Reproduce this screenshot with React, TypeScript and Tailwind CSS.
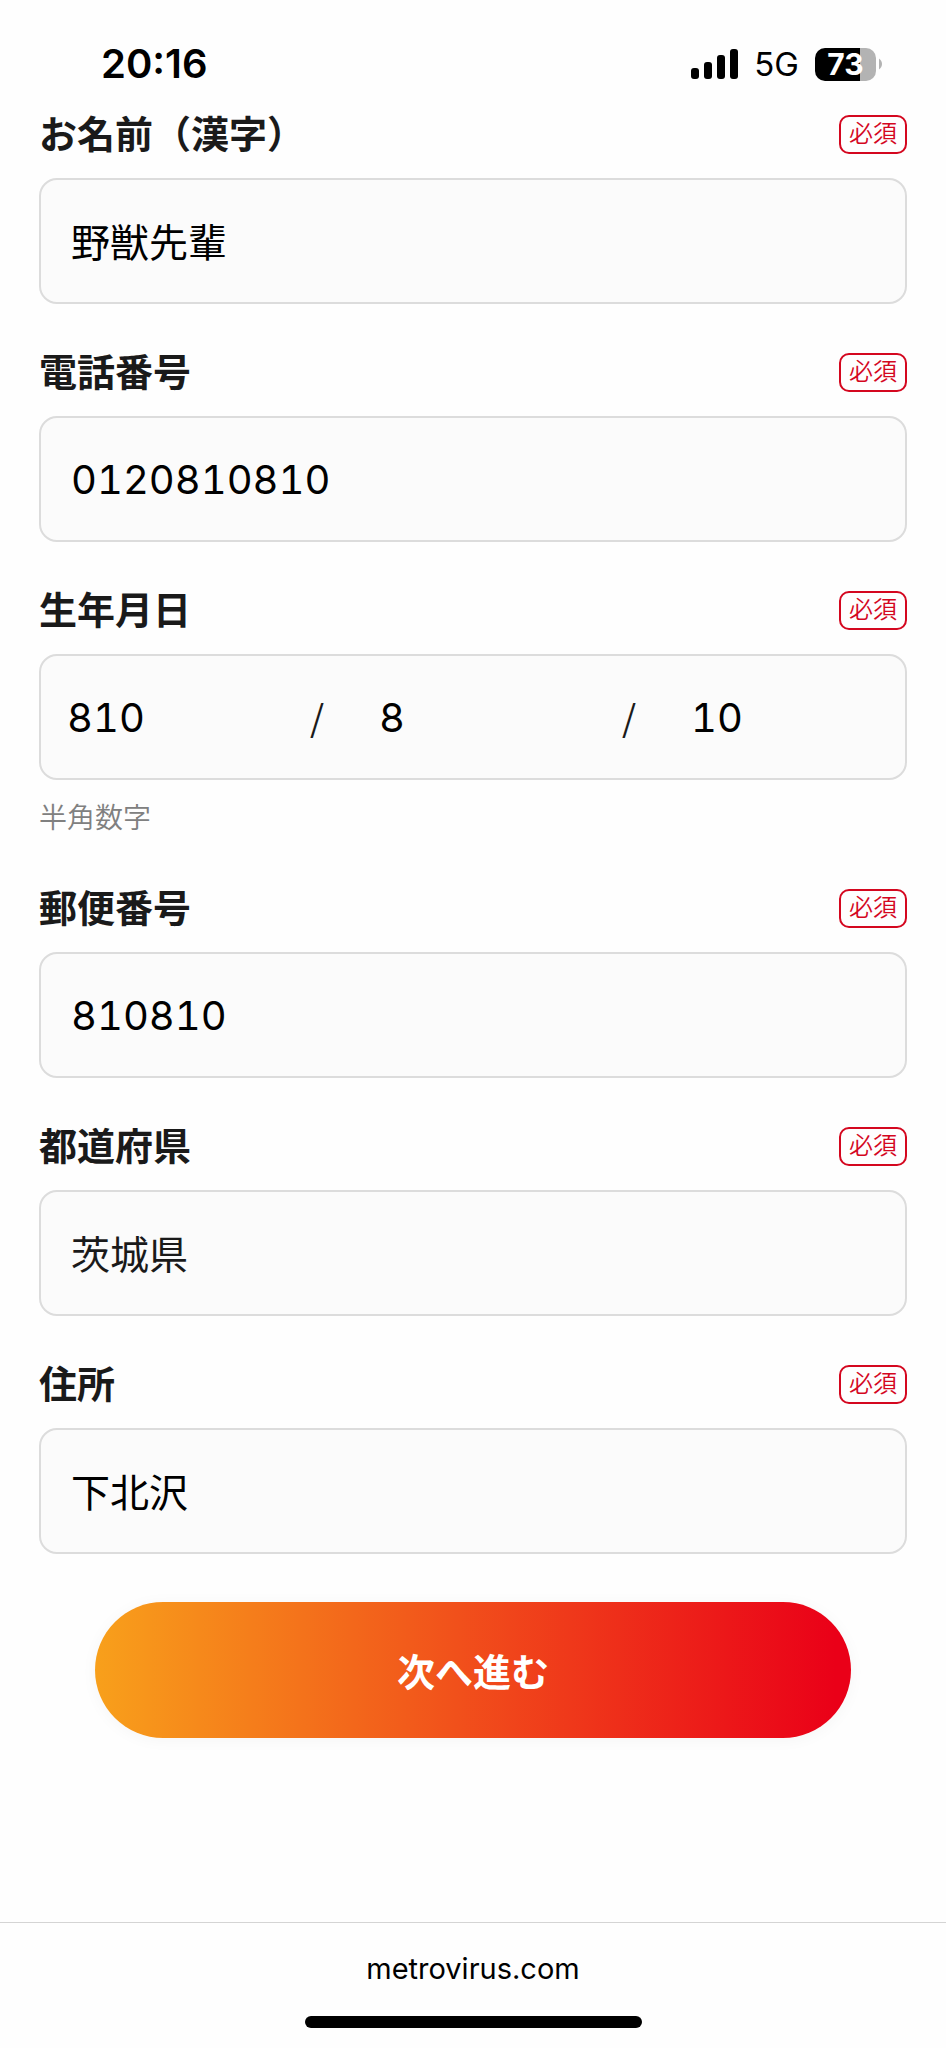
import type { ReactNode } from "react"

const INPUT =
  "w-full h-[126px] rounded-[18px] border-2 border-[#dcdcdc] bg-[#fbfbfb] px-[30px] outline-none focus:border-[#b5b5b5]"

const KANJI = "font-['Noto_Sans_CJK_JP',sans-serif] text-[39px] pb-0.5"
const DIGITS = "font-['Inter',sans-serif] text-[40px] tabular-nums"

const BIRTH_PARTS = [
  { id: "birth-year", label: "年", value: "810" },
  { id: "birth-month", label: "月", value: "8" },
  { id: "birth-day", label: "日", value: "10" },
]

function Required() {
  return (
    <span className="flex h-[39px] w-[68px] shrink-0 items-center justify-center rounded-[10px] border-2 border-[#d4071f] pb-1.5 text-[24px] leading-[24px] font-[350] text-[#d4071f]">
      必須
    </span>
  )
}

function Field({ id, label, hint, children }: { id: string; label: string; hint?: string; children: ReactNode }) {
  return (
    <div>
      <div className="mb-6 flex h-[39px] items-center justify-between">
        <label htmlFor={id} className="pb-1.5 text-[38px] leading-[39px] font-bold text-[#1a1a1a]">
          {label}
        </label>
        <Required />
      </div>
      {children}
      {hint && <p className="mt-[18px] h-[42px] text-[28px] leading-[36px] font-[350] text-[#808080]">{hint}</p>}
    </div>
  )
}

function StatusBar() {
  return (
    <header className="flex items-center justify-between pt-10 pr-16 pb-[27px] pl-[101px] font-['Inter',sans-serif] text-black">
      <time className="text-[40px] leading-[48px] font-semibold">20:16</time>
      <div className="flex items-center">
        <svg width="47" height="30" viewBox="0 0 47 30" aria-label="電波">
          <rect x="0" y="19" width="8" height="11" rx="3" />
          <rect x="13" y="13" width="8" height="17" rx="3" />
          <rect x="26" y="6" width="8" height="24" rx="3" />
          <rect x="39" y="0" width="8" height="30" rx="3" />
        </svg>
        <span className="ml-4 text-[33px] leading-[48px]">5G</span>
        {/* Battery */}
        <div className="ml-4 flex items-center gap-[3px]">
          <div className="flex h-[33px] w-[61px] items-center justify-center rounded-[10px] bg-linear-to-r from-black from-73% to-[#b3b3b3] to-73% text-[30px] leading-[33px] font-bold text-white">
            73
          </div>
          <svg width="3" height="12" viewBox="0 0 3 12" fill="#b3b3b3" aria-hidden="true">
            <path d="M0 0.5C2 2 3 4 3 6s-1 4-3 5.5z" />
          </svg>
        </div>
      </div>
    </header>
  )
}

export default function App() {
  return (
    <div className="flex min-h-screen flex-col bg-[#fefefe] font-['Noto_Sans_CJK_JP',sans-serif]">
      <StatusBar />

      <main className="flex-1 px-[39px] pb-20">
        <form onSubmit={(e) => e.preventDefault()}>
          <div className="flex flex-col gap-[49px]">
            <Field id="name" label="お名前（漢字）">
              <input id="name" type="text" defaultValue="野獣先輩" className={`${INPUT} ${KANJI} text-black`} />
            </Field>

            <Field id="tel" label="電話番号">
              <input id="tel" type="tel" defaultValue="0120810810" className={`${INPUT} ${DIGITS} text-black`} />
            </Field>

            <Field id="birth-year" label="生年月日" hint="半角数字">
              <div className="flex h-[126px] items-center rounded-[18px] border-2 border-[#dcdcdc] bg-[#fbfbfb]">
                {BIRTH_PARTS.map((part, i) => (
                  <div key={part.id} className="contents">
                    {i > 0 && (
                      <span className="w-[72px] shrink-0 pb-0.5 text-center text-[36px] text-[#1a1a1a]">/</span>
                    )}
                    <input
                      id={part.id}
                      type="text"
                      inputMode="numeric"
                      aria-label={part.label}
                      defaultValue={part.value}
                      className={`h-full min-w-0 flex-1 bg-transparent pl-[26px] text-black outline-none ${DIGITS}`}
                    />
                  </div>
                ))}
              </div>
            </Field>

            <Field id="zip" label="郵便番号">
              <input id="zip" type="text" inputMode="numeric" defaultValue="810810" className={`${INPUT} ${DIGITS} text-black`} />
            </Field>

            <Field id="pref" label="都道府県">
              <select id="pref" defaultValue="茨城県" className={`${INPUT} ${KANJI} appearance-none text-[#1a1a1a]`}>
                <option>茨城県</option>
              </select>
            </Field>

            <Field id="address" label="住所">
              <input id="address" type="text" defaultValue="下北沢" className={`${INPUT} ${KANJI} text-black`} />
            </Field>
          </div>

          <div className="px-14 pt-12">
            <button
              type="submit"
              className="h-[136px] w-full rounded-full bg-linear-to-r/srgb from-[#f8a01b] via-[#f1501b] via-48% to-[#ea0018] to-98% pb-0.5 text-[38px] font-bold text-white shadow-[0_2px_16px_rgba(0,0,0,0.04)]"
            >
              次へ進む
            </button>
          </div>
        </form>
      </main>

      {/* Browser bar */}
      <footer className="flex flex-col items-center border-t border-[#d4d4d4] pt-7 pb-5">
        <a href="#" className="font-['Inter',sans-serif] text-[29px] leading-[36px] text-black">
          metrovirus.com
        </a>
        <div className="mt-[29px] h-3 w-[337px] rounded-full bg-black" />
      </footer>
    </div>
  )
}
